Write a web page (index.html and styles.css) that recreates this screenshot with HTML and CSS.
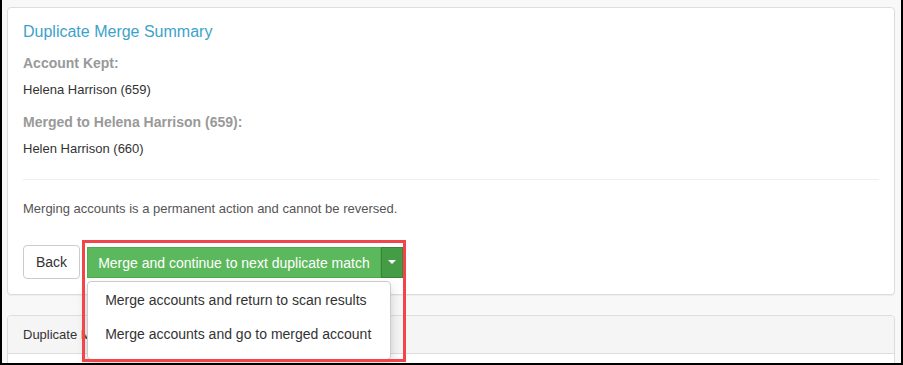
FILE: index.html
```html
<!DOCTYPE html>
<html lang="en">
<head>
  <meta charset="UTF-8">
  <title>Duplicate Merge Summary</title>
  <link rel="stylesheet" href="styles.css">
</head>
<body>
  <div class="frame">
    <div class="panel">
      <h3 class="panel-title">Duplicate Merge Summary</h3>
      <h4 class="label">Account Kept:</h4>
      <p class="value">Helena Harrison (659)</p>
      <h4 class="label">Merged to Helena Harrison (659):</h4>
      <p class="value">Helen Harrison (660)</p>
      <hr class="divider">
      <p class="note">Merging accounts is a permanent action and cannot be reversed.</p>

      <div class="actions">
        <button class="btn btn-default">Back</button>
        <div class="btn-group">
          <button class="btn btn-success">Merge and continue to next duplicate match</button>
          <button class="btn btn-success btn-caret"><span class="caret"></span></button>
          <ul class="dropdown-menu">
            <li>Merge accounts and return to scan results</li>
            <li>Merge accounts and go to merged account</li>
          </ul>
          <div class="highlight"></div>
        </div>
      </div>
    </div>

    <div class="panel panel-history">
      <div class="panel-heading">Duplicate Merge History</div>
      <div class="panel-body"></div>
    </div>
  </div>
</body>
</html>
```

FILE: styles.css
```css
* {
  box-sizing: border-box;
}

body {
  margin: 0;
  padding: 0;
  font-family: 'Liberation Sans', Arial, sans-serif;
  color: #333;
  background-color: #fff;
}

.frame {
  width: 903px;
  height: 365px;
  overflow: hidden;
  border: 2px solid #000;
  border-top: none;
  background-color: #f8f8f8;
  padding: 7px 6px 0 5px;
}

.panel {
  background-color: #fff;
  border: 1px solid #ddd;
  border-radius: 4px;
  box-shadow: 0 1px 1px rgba(0, 0, 0, 0.05);
  padding: 13px 15px 15px;
}

.panel-title {
  margin: 0 0 10px;
  font-size: 16px;
  font-weight: normal;
  color: #3ca2cb;
  line-height: 22px;
}

.label {
  margin: 0 0 8px;
  font-size: 14px;
  font-weight: bold;
  color: #999;
  line-height: 20px;
}

.value {
  margin: 0 0 13px;
  font-size: 13px;
  line-height: 18px;
  color: #333;
}

.divider {
  margin: 21px 0 20px;
  border: 0;
  border-top: 1px solid #eee;
}

.note {
  margin: 0 0 27px;
  font-size: 13px;
  line-height: 18px;
  color: #555;
}

.actions {
  display: flex;
  align-items: center;
  gap: 7px;
}

.btn {
  font-family: inherit;
  font-size: 14px;
  line-height: 20px;
  border: 1px solid transparent;
  border-radius: 4px;
  padding: 6px 12px;
  cursor: pointer;
}

.btn-default {
  background-color: #fff;
  border-color: #ccc;
  color: #333;
  height: 34px;
}

.btn-group {
  position: relative;
  display: flex;
}

.btn-success {
  background-color: #5cb85c;
  border-color: #4cae4c;
  color: #fff;
  border-radius: 0;
  height: 31px;
  padding: 5px 10px;
}

.btn-caret {
  width: 22px;
  padding: 0;
  background-color: #449d44;
  border-color: #398439;
  display: flex;
  align-items: center;
  justify-content: center;
}

.caret {
  width: 0;
  height: 0;
  border-top: 4px solid #fff;
  border-left: 4px solid transparent;
  border-right: 4px solid transparent;
}

.dropdown-menu {
  position: absolute;
  top: 34px;
  left: 0;
  width: 304px;
  margin: 0;
  padding: 1px 0 8px;
  list-style: none;
  background-color: #fff;
  border: 1px solid #ccc;
  border-radius: 4px;
  box-shadow: 0 6px 12px rgba(0, 0, 0, 0.175);
}

.dropdown-menu li {
  padding: 7px 17px;
  font-size: 14px;
  line-height: 20px;
  color: #333;
  white-space: nowrap;
}

.highlight {
  position: absolute;
  top: -7px;
  left: -5px;
  right: -3px;
  height: 122px;
  border: 3px solid #f2444b;
  pointer-events: none;
}

.panel-history {
  margin-top: 20px;
  padding: 0;
  overflow: hidden;
}

.panel-heading {
  background-color: #f5f5f5;
  border-bottom: 1px solid #ddd;
  padding: 10px 15px;
  font-size: 13px;
  line-height: 17px;
  color: #333;
}

.panel-body {
  height: 40px;
}
```
